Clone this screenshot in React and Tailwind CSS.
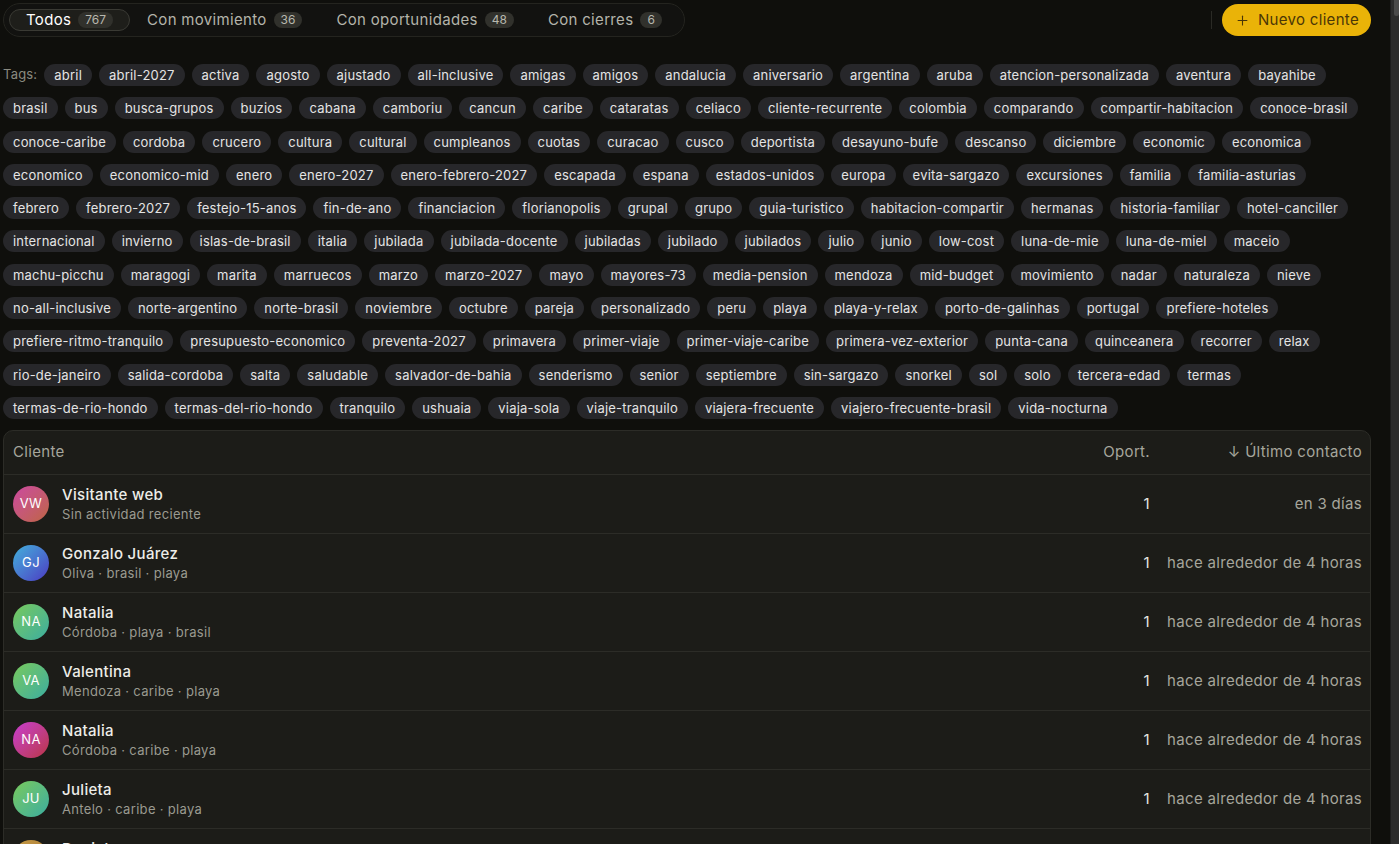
import { Plus } from 'lucide-react';

const TABS = [
  { label: 'Todos', count: 767 },
  { label: 'Con movimiento', count: 36 },
  { label: 'Con oportunidades', count: 48 },
  { label: 'Con cierres', count: 6 },
];

const TAGS = [
  'abril', 'abril-2027', 'activa', 'agosto', 'ajustado', 'all-inclusive', 'amigas', 'amigos', 'andalucia',
  'aniversario', 'argentina', 'aruba', 'atencion-personalizada', 'aventura', 'bayahibe',
  'brasil', 'bus', 'busca-grupos', 'buzios', 'cabana', 'camboriu', 'cancun', 'caribe', 'cataratas', 'celiaco',
  'cliente-recurrente', 'colombia', 'comparando', 'compartir-habitacion', 'conoce-brasil',
  'conoce-caribe', 'cordoba', 'crucero', 'cultura', 'cultural', 'cumpleanos', 'cuotas', 'curacao', 'cusco',
  'deportista', 'desayuno-bufe', 'descanso', 'diciembre', 'economic', 'economica',
  'economico', 'economico-mid', 'enero', 'enero-2027', 'enero-febrero-2027', 'escapada', 'espana',
  'estados-unidos', 'europa', 'evita-sargazo', 'excursiones', 'familia', 'familia-asturias',
  'febrero', 'febrero-2027', 'festejo-15-anos', 'fin-de-ano', 'financiacion', 'florianopolis', 'grupal', 'grupo',
  'guia-turistico', 'habitacion-compartir', 'hermanas', 'historia-familiar', 'hotel-canciller',
  'internacional', 'invierno', 'islas-de-brasil', 'italia', 'jubilada', 'jubilada-docente', 'jubiladas',
  'jubilado', 'jubilados', 'julio', 'junio', 'low-cost', 'luna-de-mie', 'luna-de-miel', 'maceio',
  'machu-picchu', 'maragogi', 'marita', 'marruecos', 'marzo', 'marzo-2027', 'mayo', 'mayores-73',
  'media-pension', 'mendoza', 'mid-budget', 'movimiento', 'nadar', 'naturaleza', 'nieve',
  'no-all-inclusive', 'norte-argentino', 'norte-brasil', 'noviembre', 'octubre', 'pareja', 'personalizado',
  'peru', 'playa', 'playa-y-relax', 'porto-de-galinhas', 'portugal', 'prefiere-hoteles',
  'prefiere-ritmo-tranquilo', 'presupuesto-economico', 'preventa-2027', 'primavera', 'primer-viaje',
  'primer-viaje-caribe', 'primera-vez-exterior', 'punta-cana', 'quinceanera', 'recorrer', 'relax',
  'rio-de-janeiro', 'salida-cordoba', 'salta', 'saludable', 'salvador-de-bahia', 'senderismo', 'senior',
  'septiembre', 'sin-sargazo', 'snorkel', 'sol', 'solo', 'tercera-edad', 'termas',
  'termas-de-rio-hondo', 'termas-del-rio-hondo', 'tranquilo', 'ushuaia', 'viaja-sola', 'viaje-tranquilo',
  'viajera-frecuente', 'viajero-frecuente-brasil', 'vida-nocturna',
];

const PINK = 'bg-linear-to-br from-[#cc479f] to-[#bf6440]';
const BLUE = 'bg-linear-to-br from-[#3fb0da] to-[#4a36c2]';
const GREEN = 'bg-linear-to-br from-[#78c957] to-[#3aad9e]';
const MAGENTA = 'bg-linear-to-br from-[#c93ad0] to-[#bb3344]';
const GOLD = 'bg-linear-to-br from-[#c49a42] to-[#a8743a]';

const CLIENTS = [
  { initials: 'VW', name: 'Visitante web', sub: 'Sin actividad reciente', opps: 1, last: 'en 3 días', color: PINK },
  { initials: 'GJ', name: 'Gonzalo Juárez', sub: 'Oliva · brasil · playa', opps: 1, last: 'hace alrededor de 4 horas', color: BLUE },
  { initials: 'NA', name: 'Natalia', sub: 'Córdoba · playa · brasil', opps: 1, last: 'hace alrededor de 4 horas', color: GREEN },
  { initials: 'VA', name: 'Valentina', sub: 'Mendoza · caribe · playa', opps: 1, last: 'hace alrededor de 4 horas', color: GREEN },
  { initials: 'NA', name: 'Natalia', sub: 'Córdoba · caribe · playa', opps: 1, last: 'hace alrededor de 4 horas', color: MAGENTA },
  { initials: 'JU', name: 'Julieta', sub: 'Antelo · caribe · playa', opps: 1, last: 'hace alrededor de 4 horas', color: GREEN },
  { initials: 'DA', name: 'Daniela', sub: 'Rosario · caribe · playa', opps: 1, last: 'hace alrededor de 5 horas', color: GOLD },
];

function TabBar() {
  return (
    <div className="flex items-center rounded-full border border-[#24241f] bg-[#121210] p-[5px]">
      {TABS.map((tab, i) => (
        <button
          key={tab.label}
          type="button"
          className={`flex h-[22px] items-center gap-[7px] rounded-full border px-4 text-[15px] ${
            i === 0
              ? 'border-[#3a3a34] bg-[#1e1e1a] text-white'
              : 'border-transparent text-[#b4b4aa]'
          }`}
        >
          {tab.label}
          <span className="rounded-full bg-[#31312c] px-[7px] text-[12px] leading-4 tracking-normal text-[#b8b8ae]">
            {tab.count}
          </span>
        </button>
      ))}
    </div>
  );
}

function ClientRow({ client }) {
  return (
    <div className="flex h-[59px] items-center border-t border-[#2c2c27]">
      <div className="flex min-w-0 flex-1 items-center gap-[13px] pl-[9px]">
        <div
          className={`flex h-9 w-9 shrink-0 items-center justify-center rounded-full text-[13px] text-white ${client.color}`}
        >
          {client.initials}
        </div>
        <div className="flex flex-col">
          <span className="text-[15px] leading-5 font-medium text-[#ededE8]">{client.name}</span>
          <span className="text-[13px] leading-[18px] text-[#9a9a90]">{client.sub}</span>
        </div>
      </div>
      <div className="w-[100px] pr-2 text-right text-[15px] text-[#e6e6e0]">{client.opps}</div>
      <div className="w-[212px] pr-2 text-right text-[15px] text-[#a6a69c]">{client.last}</div>
    </div>
  );
}

export default function App() {
  return (
    <div className="flex h-screen overflow-hidden bg-[#0f0f0c] font-['Inter',sans-serif] tracking-[0.02em]">
      <main className="min-w-0 flex-1 overflow-hidden">
        <div className="w-[1371px] pt-[3px] pl-[3px]">
          {/* Header */}
          <div className="flex items-center justify-between">
            <TabBar />
            <div className="flex items-center gap-[10px]">
              <div className="h-[18px] w-px bg-[#2a2a25]" />
              <button
                type="button"
                className="flex h-8 items-center gap-2 rounded-full bg-[#eab308] pr-3 pl-[13px] text-[15px] text-[#4a3607]"
              >
                <Plus size={15} strokeWidth={1.75} />
                Nuevo cliente
              </button>
            </div>
          </div>

          {/* Tags */}
          <div className="mt-[27px] flex flex-wrap items-center gap-x-[7px] gap-y-[11.3px] tracking-[0.2px]">
            <span className="text-[13px] text-[#8a8a80]">Tags:</span>
            {TAGS.map((tag) => (
              <span
                key={tag}
                className="h-[22px] rounded-full bg-[#27272a] px-[10px] text-[13px] leading-[22px] text-[#e4e4e4]"
              >
                {tag}
              </span>
            ))}
          </div>

          {/* Clients table */}
          <div className="mt-[11px] rounded-[10px] border border-[#2c2c27] bg-[#1c1c18]">
            <div className="flex h-[43px] items-center text-[15px] text-[#a6a69c]">
              <div className="flex-1 pl-[9px]">Cliente</div>
              <div className="w-[100px] pr-2 text-right">Oport.</div>
              <div className="w-[212px] pr-2 text-right">↓ Último contacto</div>
            </div>
            {CLIENTS.map((c, i) => (
              <ClientRow key={i} client={c} />
            ))}
          </div>
        </div>
      </main>

      {/* Scrollbar track */}
      <div className="flex w-[9px] shrink-0 justify-end border-l border-[#1e1e1e] bg-[#2c2c2c]">
        <div className="h-4 w-[5px] rounded-b-sm bg-[#4a4a4a]" />
      </div>
    </div>
  );
}
